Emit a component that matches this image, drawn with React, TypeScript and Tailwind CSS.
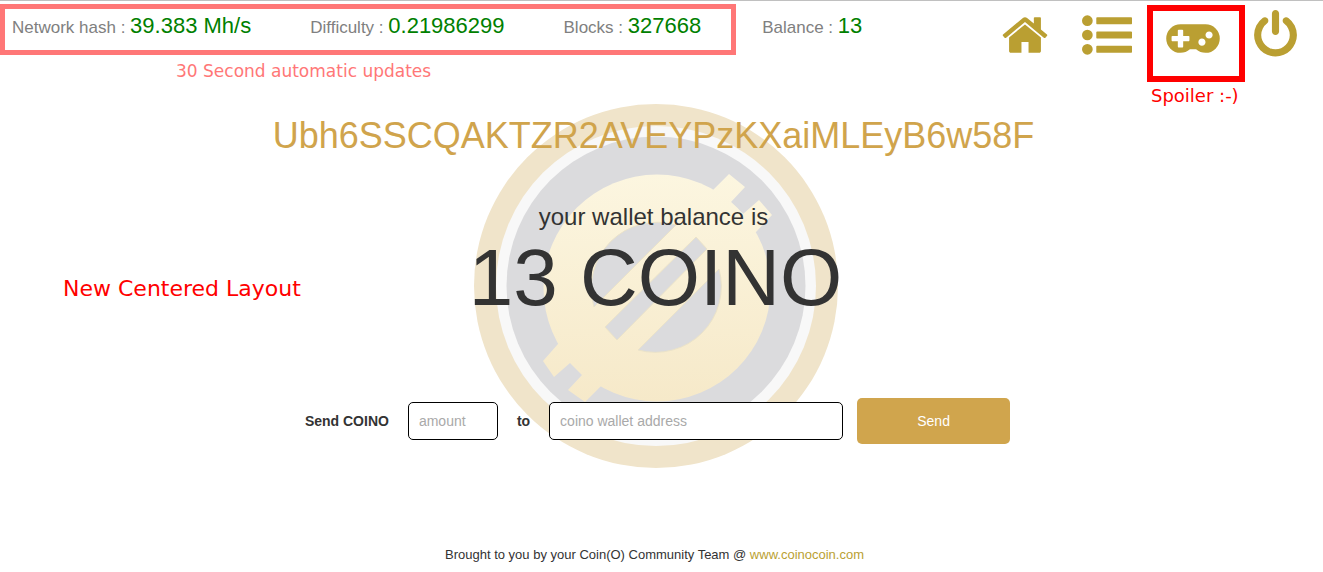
import { useState } from "react";

const stats = [
  { label: "Network hash", value: "39.383 Mh/s" },
  { label: "Difficulty", value: "0.21986299" },
  { label: "Blocks", value: "327668" },
];

const navIcons = {
  home: {
    viewBox: "64 0 1664 1792",
    className: "h-[50px] w-[46px]",
    path: "M1472 992v480q0 26-19 45t-45 19h-384v-384h-256v384h-384q-26 0-45-19t-19-45v-480q0-1 .5-3t.5-3l575-474 575 474q1 2 1 6zm223-69l-62 74q-8 9-21 11h-3q-13 0-21-7l-692-577-692 577q-12 8-24 7-13-2-21-11l-62-74q-8-10-7-23.5t11-21.5l719-599q32-26 76-26t76 26l244 204v-195q0-14 9-23t23-9h192q14 0 23 9t9 23v408l219 182q10 8 11 21.5t-7 23.5z",
  },
  list: {
    viewBox: "0 0 1792 1792",
    className: "h-[50px] w-[50px]",
    path: "M384 1408q0 80-56 136t-136 56-136-56-56-136 56-136 136-56 136 56 56 136zm0-512q0 80-56 136t-136 56-136-56-56-136 56-136 136-56 136 56 56 136zm1408 416v192q0 13-9.5 22.5t-22.5 9.5h-1216q-13 0-22.5-9.5t-9.5-22.5v-192q0-13 9.5-22.5t22.5-9.5h1216q13 0 22.5 9.5t9.5 22.5zm-1408-928q0 80-56 136t-136 56-136-56-56-136 56-136 136-56 136 56 56 136zm1408 416v192q0 13-9.5 22.5t-22.5 9.5h-1216q-13 0-22.5-9.5t-9.5-22.5v-192q0-13 9.5-22.5t22.5-9.5h1216q13 0 22.5 9.5t9.5 22.5zm0-512v192q0 13-9.5 22.5t-22.5 9.5h-1216q-13 0-22.5-9.5t-9.5-22.5v-192q0-13 9.5-22.5t22.5-9.5h1216q13 0 22.5 9.5t9.5 22.5z",
  },
  gamepad: {
    viewBox: "0 0 1920 1792",
    className: "h-[50px] w-[54px]",
    path: "M832 1088v-128q0-14-9-23t-23-9h-192v-192q0-14-9-23t-23-9h-128q-14 0-23 9t-9 23v192h-192q-14 0-23 9t-9 23v128q0 14 9 23t23 9h192v192q0 14 9 23t23 9h128q14 0 23-9t9-23v-192h192q14 0 23-9t9-23zm576 64q0-53-37.5-90.5t-90.5-37.5-90.5 37.5-37.5 90.5 37.5 90.5 90.5 37.5 90.5-37.5 37.5-90.5zm256-256q0-53-37.5-90.5t-90.5-37.5-90.5 37.5-37.5 90.5 37.5 90.5 90.5 37.5 90.5-37.5 37.5-90.5zm256 128q0 212-150 362t-362 150q-192 0-338-128h-220q-146 128-338 128-212 0-362-150t-150-362 150-362 362-150h896q212 0 362 150t150 362z",
  },
  power: {
    viewBox: "128 0 1536 1792",
    className: "h-[50px] w-[43px]",
    path: "M1664 896q0 156-61 298t-164 245-245 164-298 61-298-61-245-164-164-245-61-298q0-182 80.5-343t226.5-270q43-32 95.5-25t83.5 50q32 42 24.5 94.5t-49.5 84.5q-98 74-151.5 181t-53.5 228q0 104 40.5 198.5t109.5 163.5 163.5 109.5 198.5 40.5 198.5-40.5 163.5-109.5 109.5-163.5 40.5-198.5q0-121-53.5-228t-151.5-181q-42-32-49.5-84.5t24.5-94.5q31-43 84-50t95 25q146 109 226.5 270t80.5 343zm-640-768v640q0 52-38 90t-90 38-90-38-38-90v-640q0-52 38-90t90-38 90 38 38 90z",
  },
};

const NavIcon = ({ name }: { name: keyof typeof navIcons }) => {
  const icon = navIcons[name];
  return (
    <svg
      viewBox={icon.viewBox}
      className={icon.className}
      fill="currentColor"
      aria-hidden="true"
    >
      <path d={icon.path} />
    </svg>
  );
};

const Stat = ({ label, value }: { label: string; value: string }) => (
  <p className="text-[17px] leading-8 whitespace-nowrap text-[#808080]">
    {label} : <span className="text-[22px] text-[#008000]">{value}</span>
  </p>
);

const Coin = () => (
  <svg viewBox="0 0 364 364" className="h-[364px] w-[364px]" aria-hidden="true">
    <defs>
      <linearGradient
        id="coinFace"
        gradientUnits="userSpaceOnUse"
        x1="0"
        y1="70"
        x2="0"
        y2="298"
      >
        <stop offset="0" stopColor="#fcf6e0" />
        <stop offset="1" stopColor="#f6e9c9" />
      </linearGradient>
    </defs>
    <circle cx="182" cy="182" r="182" fill="#f0e4ca" />
    <circle cx="182" cy="182" r="160" fill="#f8f8f8" />
    <circle cx="182" cy="182" r="149.5" fill="#dbdbdd" />
    {/* face with the four prongs */}
    <g fill="url(#coinFace)">
      <circle cx="183" cy="184" r="113.5" />
      <path d="M225 100L240 85 255 70 271 83 257 98 269 110 285 96 298 111 282 128 250 150z" />
      <path d="M110 214L84 240 69 257 80 273 96 259 108 271 94 286 111 298 125 284 150 260z" />
    </g>
    {/* slashed centre */}
    <g fill="#dbdbdd" stroke="#ebe3c9" strokeWidth="1">
      <path d="M202 121A66 66 0 0 0 120 203z" />
      <path d="M222 133L233 145 143 236 131 223z" strokeLinejoin="round" />
      <path d="M245 165A66 66 0 0 1 164 246z" />
    </g>
  </svg>
);

const App = () => {
  const [amount, setAmount] = useState("");
  const [address, setAddress] = useState("");

  return (
    <div className="relative border-t border-[#c0c0c0] bg-white font-['Liberation_Sans',Arial,sans-serif] text-[#333333]">
      <header className="flex items-start justify-between pt-[3px]">
        <div>
          <div className="flex items-center">
            <div className="flex gap-[59px] border-5 border-[#ff7777] pt-px pr-[30px] pb-1.5 pl-[7px]">
              {stats.map((stat) => (
                <Stat key={stat.label} label={stat.label} value={stat.value} />
              ))}
            </div>
            <div className="pb-[5px] pl-[26px]">
              <Stat label="Balance" value="13" />
            </div>
          </div>
          <p className="mt-1 pl-44 font-['DejaVu_Sans',sans-serif] text-[17px] leading-6 text-[#ff7777]">
            30 Second automatic updates
          </p>
        </div>

        <nav className="flex gap-[34px] pt-1.5 pr-[26px] text-[#ba9f32]">
          <a href="#home" aria-label="Home">
            <NavIcon name="home" />
          </a>
          <a href="#transactions" aria-label="Transactions">
            <NavIcon name="list" />
          </a>
          <div className="relative">
            <a href="#games" aria-label="Games">
              <NavIcon name="gamepad" />
            </a>
            <div className="pointer-events-none absolute -top-[5px] -left-[19px] h-[77px] w-[98px] border-6 border-[#ff0000]" />
            <p className="absolute top-[74px] -left-[15px] font-['DejaVu_Sans',sans-serif] text-[18px] leading-6 whitespace-nowrap text-[#ff0000]">
              Spoiler :-)
            </p>
          </div>
          <a href="#logout" aria-label="Log out">
            <NavIcon name="power" />
          </a>
        </nav>
      </header>

      <main className="relative pt-[33px] text-center">
        <div className="absolute inset-x-0 top-[21px] flex justify-center pr-3">
          <Coin />
        </div>
        <p className="absolute top-[190px] left-[63px] font-['DejaVu_Sans',sans-serif] text-[22px] leading-8 text-[#ff0000]">
          New Centered Layout
        </p>

        <div className="relative">
          <h1 className="pr-4 text-4xl leading-10 text-[#d0a44c]">
            Ubh6SSCQAKTZR2AVEYPzKXaiMLEyB6w58F
          </h1>
          <h2 className="mt-12 pr-4 text-2xl leading-[26px]">
            your wallet balance is
          </h2>
          <p className="mt-1 pr-3 text-[80px] leading-[88px]">13 COINO</p>
        </div>

        <form
          className="relative mt-[76px] flex items-center justify-center pr-2 text-sm"
          onSubmit={(e) => e.preventDefault()}
        >
          <label htmlFor="amount" className="font-bold">
            Send COINO
          </label>
          <input
            id="amount"
            type="text"
            placeholder="amount"
            value={amount}
            onChange={(e) => setAmount(e.target.value)}
            className="mx-[19px] h-[38px] w-[90px] rounded-[5px] border border-black bg-white px-2.5 placeholder:text-[#a9a9a9]"
          />
          <label htmlFor="address" className="font-bold">
            to
          </label>
          <input
            id="address"
            type="text"
            placeholder="coino wallet address"
            value={address}
            onChange={(e) => setAddress(e.target.value)}
            className="mr-3.5 ml-[19px] h-[38px] w-[294px] rounded-[5px] border border-black bg-white px-2.5 placeholder:text-[#a9a9a9]"
          />
          <button
            type="submit"
            className="h-[46px] w-[153px] rounded-[5px] bg-[#d0a54d] text-white"
          >
            Send
          </button>
        </form>
      </main>

      <footer className="mt-[101px] pr-3.5 text-center text-[13px] leading-5">
        Brought to you by your Coin(O) Community Team @{" "}
        <a href="#coinocoin" className="text-[#ba9f32]">
          www.coinocoin.com
        </a>
      </footer>
    </div>
  );
};

export default App;
